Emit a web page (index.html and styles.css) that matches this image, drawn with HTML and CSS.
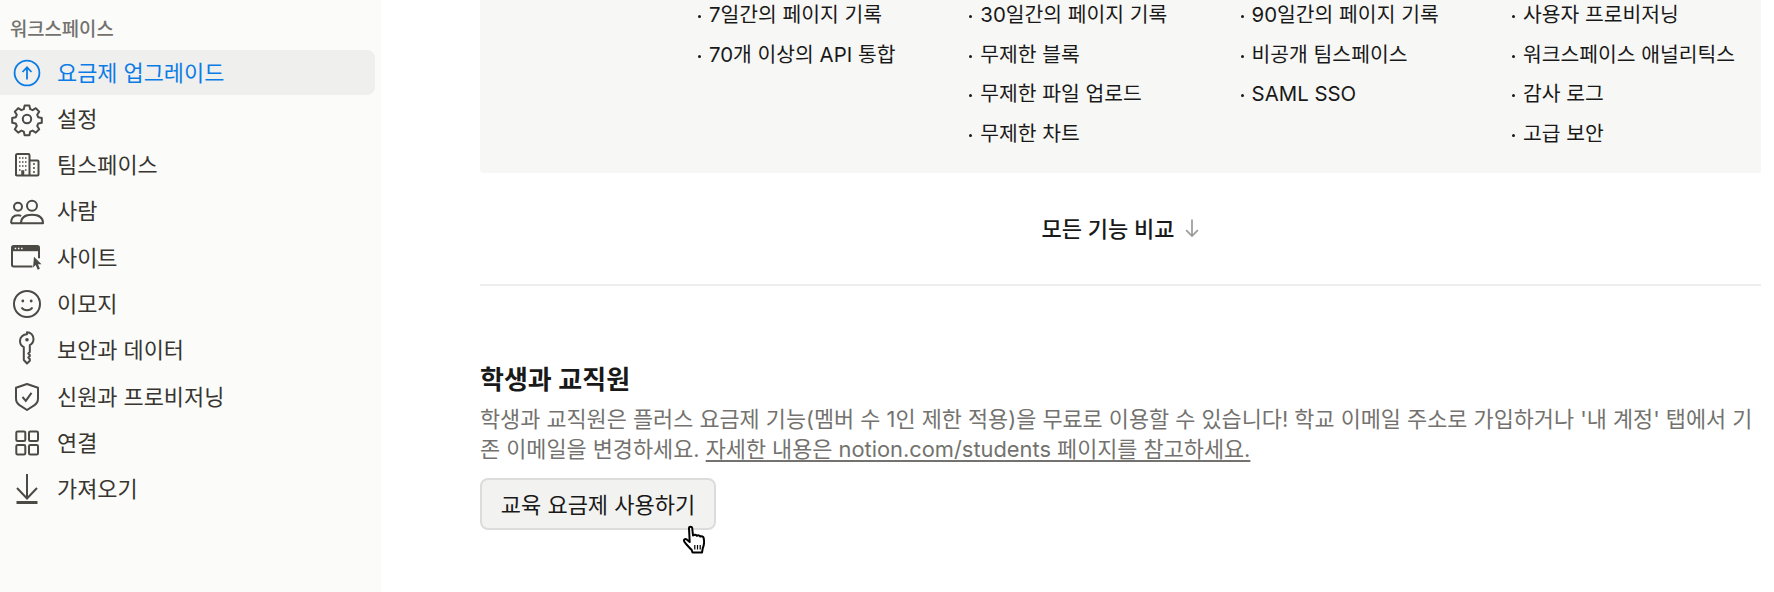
FILE: index.html
```html
<!DOCTYPE html>
<html lang="ko">
<head>
<meta charset="utf-8">
<title>요금제 업그레이드</title>
<link rel="stylesheet" href="styles.css">
</head>
<body>
<div class="app">
  <aside class="sidebar">
    <div class="side-label">워크스페이스</div>
    <nav class="nav">
      <a class="nav-row active">
        <svg class="nav-icon" viewBox="0 0 30 30"><circle cx="15" cy="15" r="12.4"/><path d="M15 21.500V9.500M10.500 14 15 9.300l4.500 4.700"/></svg>
        <span>요금제 업그레이드</span>
      </a>
      <a class="nav-row">
        <svg class="nav-icon" viewBox="0 0 30 30"><circle cx="15" cy="15" r="4.200"/><path d="M12.600 1.600h4.800l.8 3.600 2.400 1 3.200-2 3.400 3.400-2 3.200 1 2.400 3.600.8v4.800l-3.600.8-1 2.400 2 3.200-3.400 3.400-3.200-2-2.400 1-.8 3.600h-4.800l-.8-3.600-2.400-1-3.200 2-3.400-3.400 2-3.200-1-2.400-3.600-.8v-4.800l3.600-.8 1-2.400-2-3.200 3.400-3.400 3.200 2 2.400-1z" stroke-linejoin="round"/></svg>
        <span>설정</span>
      </a>
      <a class="nav-row">
        <svg class="nav-icon" viewBox="0 0 30 30"><path d="M4 25.500V5.200c0-.7.5-1.200 1.200-1.200h11.100c.7 0 1.200.5 1.200 1.200v20.300M17.500 10.500h8c.6 0 1 .4 1 1v13c0 .6-.4 1-1 1H5c-.6 0-1-.4-1-1"/><path class="thick" d="M7 8h1.500M10 8h1.500M13 8h1.500M7 12h1.500M10 12h1.500M13 12h1.500M7 16h1.500M10 16h1.500M13 16h1.500M7 20h1.500M13 20h1.500M21 14h2M21 18h2M21 22h2M10 25v-4h1.500v4"/></svg>
        <span>팀스페이스</span>
      </a>
      <a class="nav-row">
        <svg class="nav-icon" viewBox="2 -3.300 30 30"><circle cx="8" cy="7.500" r="4"/><circle cx="22" cy="6.500" r="5"/><path d="M1 24c0-5 2.500-8 7-8 1.200 0 2.300.2 3.200.6M1 24h9.500M11 24c0-5.500 4-8.500 11-8.500S33 18.500 33 24z" stroke-linejoin="round"/></svg>
        <span>사람</span>
      </a>
      <a class="nav-row">
        <svg class="nav-icon" viewBox="1.500 -1.200 30 30"><path d="M28.500 14V3.500c0-1-.7-1.700-1.700-1.700H3.200c-1 0-1.700.7-1.700 1.700v17c0 1 .7 1.700 1.700 1.700H22"/><path class="solid" d="M1.500 1.800h27V7h-27z"/><path class="dots" d="M4.200 4.400h1.500M7.400 4.400h1.500M10.600 4.400h1.500"/><path class="solid" d="M23.500 12.500 31 20h-3.600l2 4.500-2.200 1-2-4.600-2.700 2.500z"/></svg>
        <span>사이트</span>
      </a>
      <a class="nav-row">
        <svg class="nav-icon" viewBox="0 0 30 30"><circle cx="15" cy="15" r="13"/><circle class="solid" cx="10.800" cy="12" r="1.400"/><circle class="solid" cx="19.200" cy="12" r="1.400"/><path d="M9.500 18.500c1.500 2 3.300 2.800 5.500 2.800s4-.8 5.500-2.800"/></svg>
        <span>이모지</span>
      </a>
      <a class="nav-row">
        <svg class="nav-icon" viewBox="0 2 30 30"><path d="M15 1.200c-4 0-7 3-7 6.800 0 2.800 1.500 5 3.800 6.100V27l3.200 3.500 2.800-2.800v-1.700l-1.500-1.500 1.500-1.500v-1l-1.500-1.500 1.500-1.500v-6.900c2.200-1.100 3.700-3.300 3.700-6.100 0-3.800-2.900-6.800-6.500-6.800z" stroke-linejoin="round"/><circle class="solid" cx="15" cy="6.800" r="1.800"/></svg>
        <span>보안과 데이터</span>
      </a>
      <a class="nav-row">
        <svg class="nav-icon" viewBox="0 0 30 30"><path d="M15 2 26 5.800v10.700c0 3.300-1 4.800-3.500 6.600L15 28l-7.500-4.900C5 21.300 4 19.800 4 16.500V5.800z" stroke-linejoin="round"/><path d="m10.500 15 3.300 3.800 5.700-8"/></svg>
        <span>신원과 프로비저닝</span>
      </a>
      <a class="nav-row">
        <svg class="nav-icon" viewBox="0 0 30 30"><rect x="4.300" y="3.500" width="9" height="9.500" rx="1.300"/><rect x="17" y="3.500" width="9" height="9.500" rx="1.300"/><rect x="4.300" y="17" width="9" height="9.500" rx="1.300"/><rect x="17" y="17" width="9" height="9.500" rx="1.300"/></svg>
        <span>연결</span>
      </a>
      <a class="nav-row">
        <svg class="nav-icon" viewBox="0 1 30 30"><path d="M15 1v24.500M5 15l10 10.500L25 15"/><path class="bar" d="M4.500 29.500h21"/></svg>
        <span>가져오기</span>
      </a>
    </nav>
  </aside>

  <main class="main">
    <section class="features">
      <ul class="feature-col">
        <li>7일간의 페이지 기록</li>
        <li>70개 이상의 API 통합</li>
      </ul>
      <ul class="feature-col">
        <li>30일간의 페이지 기록</li>
        <li>무제한 블록</li>
        <li>무제한 파일 업로드</li>
        <li>무제한 차트</li>
      </ul>
      <ul class="feature-col">
        <li>90일간의 페이지 기록</li>
        <li>비공개 팀스페이스</li>
        <li>SAML SSO</li>
      </ul>
      <ul class="feature-col">
        <li>사용자 프로비저닝</li>
        <li>워크스페이스 애널리틱스</li>
        <li>감사 로그</li>
        <li>고급 보안</li>
      </ul>
    </section>

    <div class="compare">
      <span class="compare-text">모든 기능 비교</span>
      <svg class="compare-arrow" viewBox="0 0 16 20"><path d="M8 1.500v16.500M2.200 12.200 8 18l5.800-5.800"/></svg>
    </div>

    <section class="students">
      <h2 class="students-title">학생과 교직원</h2>
      <p class="students-desc">학생과 교직원은 플러스 요금제 기능(멤버 수 1인 제한 적용)을 무료로 이용할 수 있습니다! 학교 이메일 주소로 가입하거나 '내 계정' 탭에서 기존 이메일을 변경하세요. <a class="students-link">자세한 내용은 notion.com/students 페이지를 참고하세요.</a></p>
      <div class="button-wrap">
        <button class="edu-button">교육 요금제 사용하기</button>
        <svg class="cursor" viewBox="0 0 26 30"><path d="M7 2.500c0-1.600 3-1.600 3.200 0l.8 7.500c1.500-1 3.300-.8 3.800.3 1.300-.8 3-.5 3.500.7 1.300-.5 3 0 3.300 1.300.8 3.500.5 7.500-.8 10.200l-.8 4.500H10.500l-.8-2.500C7.500 22 4 19 2.200 16c-1-1.700 1-3.200 2.500-2l3 2.500z"/><path class="cursor-lines" d="M12.800 19.500v4.500M15.500 19.500v4.500M18.200 19.500v4.500"/></svg>
      </div>
    </section>
  </main>
</div>
</body>
</html>
```

FILE: styles.css
```css
* { box-sizing: border-box; }

html, body {
  margin: 0;
  height: 100%;
  overflow: hidden;
  background: #fff;
}

body {
  font-family: Inter, "Noto Sans CJK KR", sans-serif;
  color: #191919;
}

.app {
  display: flex;
  width: 1774px;
  height: 592px;
}

.sidebar {
  flex: 0 0 381px;
  padding: 19px 6px 0 0;
  background: #fbfbfa;
}

.side-label {
  height: 22px;
  padding-left: 10px;
  font-size: 18.800px;
  line-height: 22px;
  font-weight: 500;
  color: #73726e;
}

.nav {
  display: flex;
  flex-direction: column;
  gap: 1.300px;
  margin-top: 9px;
}

.nav-row {
  display: flex;
  align-items: center;
  gap: 15px;
  height: 45px;
  padding-left: 12px;
  border-radius: 0 8px 8px 0;
  font-size: 21.900px;
  color: #37352f;
}

.nav-row span {
  margin-top: -3px;
}

.nav-row.active {
  background: #efefee;
  color: #0b7ce6;
}

.nav-icon {
  flex: 0 0 30px;
  width: 30px;
  height: 30px;
  fill: none;
  overflow: visible;
  stroke: #4c4a45;
  stroke-width: 2;
}

.active .nav-icon {
  stroke: #0b7ce6;
  stroke-width: 1.800;
}

.nav-icon .solid { fill: #4c4a45; stroke: none; }
.nav-icon .dots { stroke: #fbfbfa; stroke-width: 1.500; }
.nav-icon .thick { stroke-width: 1.500; }
.nav-icon .bar { stroke-width: 3; }

.main {
  flex: 1;
  min-width: 0;
  padding: 0 13px 0 99px;
}

.features {
  display: grid;
  grid-template-columns: repeat(4, 271.300px);
  height: 172.500px;
  padding-left: 216px;
  background: #f7f7f5;
  border-radius: 0 0 3px 3px;
}

.feature-col {
  display: flex;
  flex-direction: column;
  gap: 11.700px;
  margin: 0;
  padding: 1px 0 0;
  list-style: none;
}

.feature-col li {
  position: relative;
  padding-left: 13px;
  font-size: 20.400px;
  line-height: 28px;
  white-space: nowrap;
}

.feature-col li::before {
  content: "";
  position: absolute;
  left: 2px;
  top: 14px;
  width: 3px;
  height: 3px;
  border-radius: 50%;
  background: #191919;
}

.compare {
  display: flex;
  align-items: center;
  justify-content: center;
  gap: 9px;
  height: 113px;
  border-bottom: 2px solid #eeeeec;
}

.compare-text {
  font-size: 22px;
  font-weight: 500;
  margin-top: -3px;
}

.compare-arrow {
  width: 16px;
  height: 20px;
  fill: none;
  stroke: #9b9a97;
  stroke-width: 1.700;
}

.students {
  padding-top: 77px;
}

.students-title {
  margin: 0;
  font-size: 26px;
  line-height: 34px;
  font-weight: 600;
}

.students-desc {
  margin: 7px 0 0;
  font-size: 21.850px;
  line-height: 30px;
  color: #73726e;
  word-break: break-all;
}

.students-link {
  text-decoration: underline;
  text-underline-offset: 3px;
}

.button-wrap {
  position: relative;
  margin-top: 14px;
  width: 236px;
}

.edu-button {
  display: block;
  width: 236px;
  height: 52px;
  padding: 0 0 2px;
  border: 2px solid #dcdcda;
  border-radius: 8px;
  background: #f2f2f0;
  font: inherit;
  font-size: 22px;
  color: #191919;
}

.cursor {
  position: absolute;
  left: 202px;
  top: 47px;
  width: 26px;
  height: 31px;
  fill: #fff;
  stroke: #000;
  stroke-width: 2;
  stroke-linejoin: round;
}

.cursor-lines { stroke-width: 1.200; }
```
